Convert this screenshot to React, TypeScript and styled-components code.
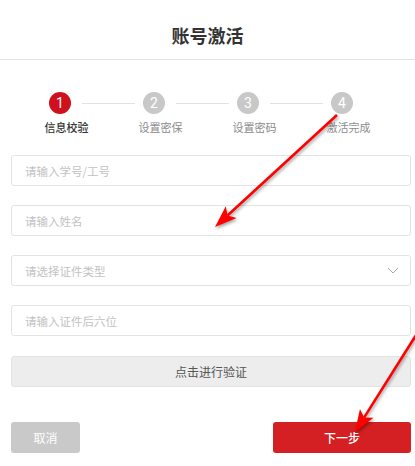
import React from "react";
import styled, { createGlobalStyle } from "styled-components";

const GlobalStyle = createGlobalStyle`
  html, body {
    margin: 0;
    padding: 0;
    background: #fff;
    font-family: "Noto Sans CJK SC", "Noto Sans", sans-serif;
  }
`;

const steps = ["信息校验", "设置密保", "设置密码", "激活完成"];

const fields = [
  { placeholder: "请输入学号/工号" },
  { placeholder: "请输入姓名" },
  { placeholder: "请选择证件类型", select: true },
  { placeholder: "请输入证件后六位" },
];

const Page = styled.div`
  position: relative;
  width: 415px;
  height: 466px;
  overflow: hidden;
`;

const Header = styled.header`
  height: 60px;
  border-bottom: 1px solid #e4e4e4;
  display: flex;
  align-items: center;
  justify-content: center;
  padding-top: 11px;
  box-sizing: border-box;
  font-size: 18px;
  font-weight: 700;
  color: #333;
`;

const Steps = styled.ol`
  list-style: none;
  margin: 32px 0 0;
  padding: 0 0 0 13px;
  display: grid;
  grid-template-columns: repeat(4, 94px);
`;

const Step = styled.li<{ last: boolean }>`
  position: relative;
  display: flex;
  flex-direction: column;
  align-items: center;

  &::after {
    content: "";
    display: ${({ last }) => (last ? "none" : "block")};
    position: absolute;
    top: 11px;
    left: calc(50% + 22px);
    width: 53px;
    height: 1px;
    background: #e2e2e2;
  }
`;

const Circle = styled.span<{ active: boolean }>`
  width: 22px;
  height: 22px;
  border-radius: 50%;
  background: ${({ active }) => (active ? "#d0101c" : "#c8c8c8")};
  color: #fff;
  font-family: Roboto, "Noto Sans", sans-serif;
  font-size: 14px;
  display: flex;
  align-items: center;
  justify-content: center;
`;

const StepLabel = styled.span<{ active: boolean }>`
  margin: 5px 0 0 13px;
  font-size: 11px;
  line-height: 16px;
  color: ${({ active }) => (active ? "#333" : "#8c8c8c")};
  font-weight: ${({ active }) => (active ? 500 : 400)};
`;

const Form = styled.form`
  margin-top: 20px;
  padding: 0 4px 0 11px;
  display: flex;
  flex-direction: column;
  gap: 19px;
`;

const Field = styled.div`
  position: relative;
  height: 31px;
  border: 1px solid #e3e3e3;
  border-radius: 3px;
  box-sizing: border-box;
  display: flex;
  align-items: center;
  justify-content: space-between;
  padding: 0 11px 0 13px;
`;

const Input = styled.input`
  flex: 1;
  border: none;
  outline: none;
  padding: 0;
  background: transparent;
  font-family: inherit;
  font-size: 11.5px;
  color: #333;

  &::placeholder {
    color: #c2c2c2;
  }
`;

const VerifyButton = styled.button`
  height: 31px;
  margin-top: 1px;
  border: 1px solid #e3e3e3;
  border-radius: 3px;
  background: #ededed;
  font-family: inherit;
  font-size: 12px;
  color: #555;
`;

const Actions = styled.div`
  margin-top: 35px;
  padding: 0 4px 0 11px;
  display: flex;
  justify-content: space-between;
`;

const ActionButton = styled.button<{ primary?: boolean }>`
  width: ${({ primary }) => (primary ? "138px" : "69px")};
  height: 31px;
  border: none;
  border-radius: 3px;
  background: ${({ primary }) => (primary ? "#d42022" : "#c9c9c9")};
  color: #fff;
  font-family: inherit;
  font-size: 12px;
  font-weight: ${({ primary }) => (primary ? 500 : 400)};
`;

const Overlay = styled.svg`
  position: absolute;
  inset: 0;
  pointer-events: none;
  filter: drop-shadow(1px 2px 1.5px rgba(0, 0, 0, 0.35));
`;

const Chevron = () => (
  <svg width="12" height="7" viewBox="0 0 12 7">
    <path d="M1 1l5 5 5-5" fill="none" stroke="#a8a8a8" strokeWidth="1" />
  </svg>
);

const Arrow = ({ x1, y1, x2, y2 }: { x1: number; y1: number; x2: number; y2: number }) => {
  const a = Math.atan2(y2 - y1, x2 - x1);
  const len = 22;
  const w = 8;
  const bx = x2 - Math.cos(a) * len;
  const by = y2 - Math.sin(a) * len;
  const px = -Math.sin(a) * w;
  const py = Math.cos(a) * w;
  const mx = x2 - Math.cos(a) * (len - 5);
  const my = y2 - Math.sin(a) * (len - 5);
  return (
    <g fill="#ff0000" stroke="#ff0000">
      <line x1={x1} y1={y1} x2={mx} y2={my} strokeWidth="2.6" />
      <polygon
        points={`${x2},${y2} ${bx + px},${by + py} ${mx},${my} ${bx - px},${by - py}`}
        stroke="none"
      />
    </g>
  );
};

const App = () => (
  <Page>
    <GlobalStyle />
    <Header>账号激活</Header>
    <Steps>
      {steps.map((label, i) => (
        <Step key={label} last={i === steps.length - 1}>
          <Circle active={i === 0}>{i + 1}</Circle>
          <StepLabel active={i === 0}>{label}</StepLabel>
        </Step>
      ))}
    </Steps>
    <Form onSubmit={(e) => e.preventDefault()}>
      {fields.map((f) => (
        <Field key={f.placeholder}>
          <Input placeholder={f.placeholder} readOnly={f.select} />
          {f.select && <Chevron />}
        </Field>
      ))}
      <VerifyButton type="button">点击进行验证</VerifyButton>
    </Form>
    <Actions>
      <ActionButton type="button">取消</ActionButton>
      <ActionButton type="button" primary>下一步</ActionButton>
    </Actions>
    <Overlay width="415" height="466" viewBox="0 0 415 466">
      <Arrow x1={337} y1={115} x2={215} y2={227} />
      <Arrow x1={418} y1={332} x2={355} y2={432} />
    </Overlay>
  </Page>
);

export default App;
